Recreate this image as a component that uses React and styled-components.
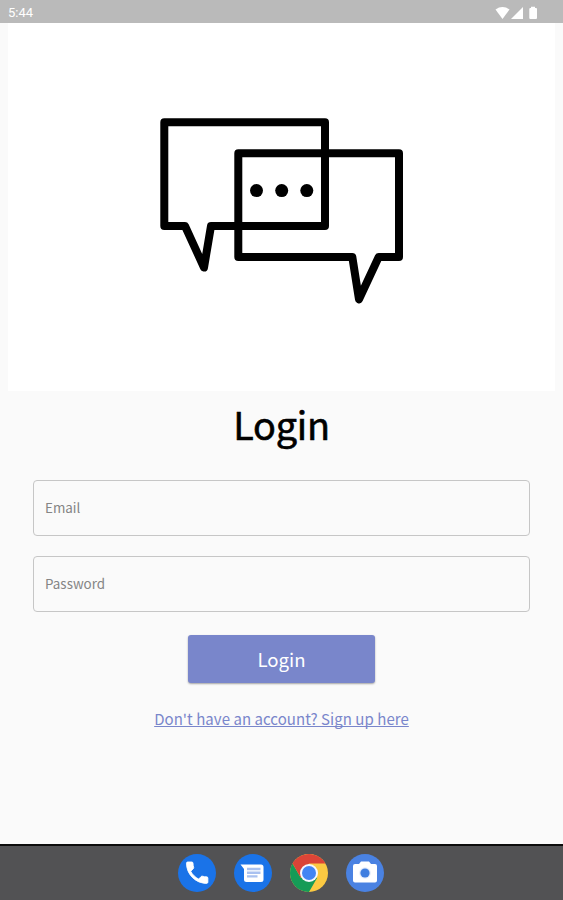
import React from "react";
import styled, { createGlobalStyle } from "styled-components";

const GlobalStyle = createGlobalStyle`
  * { box-sizing: border-box; }
  body { margin: 0; background: #fafafa; }
`;

const Screen = styled.div`
  display: flex;
  flex-direction: column;
  width: 100%;
  height: 900px;
  overflow: hidden;
  background: #fafafa;
  font-family: "Noto Sans CJK SC", "Noto Sans", sans-serif;
`;

const StatusBar = styled.header`
  display: flex;
  justify-content: space-between;
  align-items: center;
  height: 23px;
  flex: none;
  padding: 2px 26px 0 8px;
  background: #bababa;
  color: #fff;
  font: 400 13px/20px Roboto, sans-serif;
`;

const StatusIcons = styled.svg`
  display: block;
  width: 42px;
  height: 14px;
`;

const Hero = styled.div`
  flex: none;
  height: 368px;
  margin: 0 8px;
  background: #fff;
`;

const HeroArt = styled.svg`
  display: block;
  width: 547px;
  height: 368px;
`;

const Main = styled.main`
  flex: 1;
  display: flex;
  flex-direction: column;
  align-items: center;
  padding: 3px 33px 0;
`;

const Title = styled.h1`
  margin: 0;
  height: 60px;
  font-size: 37.8px;
  line-height: 60px;
  font-weight: 400;
  letter-spacing: -0.2px;
  -webkit-text-stroke: 0.6px #000;
  color: #000;
`;

const Form = styled.form`
  display: flex;
  flex-direction: column;
  align-items: center;
  width: 100%;
  margin-top: 26px;
`;

const Field = styled.input`
  width: 100%;
  height: 56px;
  margin-bottom: 20px;
  padding: 0 11px 2px;
  border: 1.5px solid #c6c6c6;
  border-radius: 4px;
  outline: none;
  background: transparent;
  font: 400 13.4px/20px "Noto Sans CJK SC", "Noto Sans", sans-serif;
  color: #222;

  &::placeholder {
    color: #858585;
    opacity: 1;
  }
`;

const SubmitButton = styled.button`
  width: 187px;
  height: 48px;
  margin-top: 3px;
  padding: 0 0 1px;
  border: 0;
  border-radius: 3px;
  background: #7986cb;
  box-shadow: 0 1px 2px rgba(0, 0, 0, 0.35);
  color: #fff;
  font: 400 18.6px/47px "Noto Sans CJK SC", "Noto Sans", sans-serif;
`;

const SignUpLink = styled.a`
  margin-top: 24px;
  font-size: 15px;
  line-height: 24px;
  letter-spacing: 0.05px;
  white-space: nowrap;
  color: #7986cb;
  text-decoration: underline;
  text-decoration-thickness: 1px;
  text-decoration-skip-ink: none;
  text-underline-offset: 1px;
`;

const Dock = styled.footer`
  display: flex;
  justify-content: center;
  align-items: center;
  gap: 18px;
  height: 56px;
  flex: none;
  padding: 0 1px 1px 0;
  border-top: 2px solid #0c0c0c;
  background: #525254;
`;

const AppIcon = styled.svg`
  display: block;
  width: 38px;
  height: 38px;
`;

const HeroDrawing = () => (
  <HeroArt viewBox="8 23 547 368">
    <g fill="none" stroke="#000" strokeWidth="8" strokeLinejoin="round">
      <path d="M164.3 122.3H325V226H211L204 267.5L185 226H164.3Z" />
      <path d="M238.3 153.3H399V257H378.7L359 299.3L352.3 257H238.3Z" />
    </g>
    <circle cx="256.5" cy="190.6" r="6.5" />
    <circle cx="281.7" cy="190.6" r="6.5" />
    <circle cx="306.8" cy="190.6" r="6.5" />
  </HeroArt>
);

const PhoneIcon = () => (
  <AppIcon viewBox="0 0 38 38">
    <circle cx="19" cy="19" r="19" fill="#1a73e8" />
    <path
      transform="translate(4.9 4.4) scale(1.19)"
      fill="#fff"
      stroke="#fff"
      strokeWidth="0.7"
      strokeLinejoin="round"
      d="M6.62 10.79c1.44 2.83 3.76 5.14 6.59 6.59l2.2-2.2c.27-.27.67-.36 1.02-.24 1.12.37 2.33.57 3.57.57.55 0 1 .45 1 1V20c0 .55-.45 1-1 1-9.39 0-17-7.61-17-17 0-.55.45-1 1-1h3.5c.55 0 1 .45 1 1 0 1.25.2 2.45.57 3.57.11.35.03.74-.25 1.02z"
    />
  </AppIcon>
);

const MessagesIcon = () => (
  <AppIcon viewBox="0 0 38 38">
    <circle cx="19" cy="19" r="19" fill="#1a73e8" />
    <path
      fill="#fff"
      d="M6.5 10.5H27Q29.5 10.5 29.5 13V25.5Q29.5 28 27 28H12.5Q10 28 10 25.5V15Z"
    />
    <path d="M13 15H26.5M13 18.7H26.5M13 22.4H23.5" stroke="#a9c1f0" strokeWidth="2.4" />
  </AppIcon>
);

const ChromeIcon = () => (
  <AppIcon viewBox="0 0 38 38">
    <circle cx="19" cy="19" r="19" fill="#fbc942" />
    <path fill="#169b57" d="M2.55 9.5A19 19 0 0 0 19 38L27.2 23.7L10.8 23.7Z" />
    <path fill="#db4437" d="M2.55 9.5A19 19 0 0 1 35.45 9.5H19L10.8 23.7Z" />
    <circle cx="19" cy="19" r="9" fill="#f5f8ff" />
    <circle cx="19" cy="19" r="7" fill="#4285f4" />
  </AppIcon>
);

const CameraIcon = () => (
  <AppIcon viewBox="0 0 38 38">
    <circle cx="19" cy="19" r="19" fill="#4a82e2" />
    <path
      fill="#fff"
      d="M9 10H13L15 7.5H23L25 10H29Q31 10 31 12V26.5Q31 28.5 29 28.5H9Q7 28.5 7 26.5V12Q7 10 9 10Z"
    />
    <circle cx="19" cy="19" r="5.8" fill="#e4ecfb" />
    <circle cx="19" cy="19" r="4.6" fill="#3f7ee0" />
  </AppIcon>
);

export default function App() {
  return (
    <Screen>
      <GlobalStyle />
      <StatusBar>
        <span>5:44</span>
        <StatusIcons viewBox="495 5 42 14" fill="#fff">
          <path d="M495.5 8.5Q502.5 3.7 509.5 8.5L502.5 18Z" />
          <path d="M511 18L523 6V18Z" />
          <path d="M531 5.7H535V7H536Q537 7 537 8V17Q537 18 536 18H530.3Q529.3 18 529.3 17V8Q529.3 7 530.3 7H531Z" />
        </StatusIcons>
      </StatusBar>
      <Hero>
        <HeroDrawing />
      </Hero>
      <Main>
        <Title>Login</Title>
        <Form onSubmit={(event) => event.preventDefault()}>
          <Field type="email" placeholder="Email" />
          <Field type="password" placeholder="Password" />
          <SubmitButton type="submit">Login</SubmitButton>
        </Form>
        <SignUpLink href="#">Don't have an account? Sign up here</SignUpLink>
      </Main>
      <Dock>
        <PhoneIcon />
        <MessagesIcon />
        <ChromeIcon />
        <CameraIcon />
      </Dock>
    </Screen>
  );
}
